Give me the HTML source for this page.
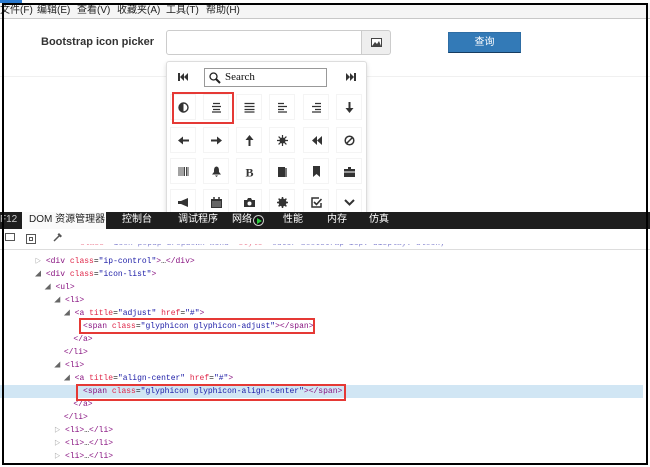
<!DOCTYPE html>
<html><head><meta charset="utf-8"><style>
*{margin:0;padding:0;box-sizing:border-box}
body{width:650px;height:467px;background:#fff;position:relative;overflow:hidden;font-family:"Liberation Sans","Noto Sans CJK SC",sans-serif}
.a{position:absolute}
.menu{left:0;top:3px;width:650px;height:16px;background:#f5f5f5;border-bottom:1px solid #c8c8c8;font-size:10px;line-height:15px;color:#222}
.menu span{position:absolute;top:0}
.cell{position:absolute;width:26px;height:26px;border:1px solid #f4f4f4}
.cell svg{position:absolute;left:7px;top:7px;width:11px;height:11px}
.code{font-family:"Liberation Mono","Noto Sans CJK SC",monospace;font-size:8px;color:#222;white-space:pre;line-height:13px}
.t{color:#881280}.n{color:#e0284a}.v{color:#1a1aa6}
.tab{position:absolute;top:0;color:#fff;font-size:10px;line-height:16px}
.tri{color:#666;font-size:6px}
</style></head><body>
<div class="a menu"><span style="left:0">文件(F)</span><span style="left:37px">编辑(E)</span><span style="left:77px">查看(V)</span><span style="left:117px">收藏夹(A)</span><span style="left:166px">工具(T)</span><span style="left:206px">帮助(H)</span></div>

<div class="a" style="left:0;top:76px;width:650px;height:1px;background:#f0f0f0"></div>
<div class="a" style="left:41px;top:36px;font-size:11px;font-weight:bold;color:#333">Bootstrap icon picker</div>
<div class="a" style="left:166px;top:30px;width:196px;height:25px;border:1px solid #ccc;border-radius:3px 0 0 3px;background:#fff"></div>
<div class="a" style="left:361px;top:30px;width:30px;height:25px;border:1px solid #ccc;border-radius:0 3px 3px 0;background:#eee"><svg class="a" style="left:9px;top:7px" width="11" height="9"><rect x="0.5" y="0.5" width="10" height="8" fill="#fff" stroke="#444"/><path d="M1 8L4 4 6 6 8 3 10 8Z" fill="#444"/></svg></div>
<div class="a" style="left:448px;top:32px;width:73px;height:21px;background:#337ab7;border:1px solid #2e6da4;border-bottom-color:#163c60;color:#fff;font-size:10px;text-align:center;line-height:19px">查询</div>

<div class="a" style="left:166px;top:61px;width:201px;height:160px;border:1px solid #ddd;border-radius:3px;background:#fff;box-shadow:0 2px 5px rgba(0,0,0,.15)"></div>
<svg class="a" style="left:178px;top:73px" width="10" height="8"><rect x="0" y="0" width="2" height="8" fill="#333"/><path d="M6 0L2 4 6 8ZM10 0L6 4 10 8Z" fill="#333"/></svg>
<svg class="a" style="left:346px;top:73px" width="10" height="8"><rect x="8" y="0" width="2" height="8" fill="#333"/><path d="M0 0L4 4 0 8ZM4 0L8 4 4 8Z" fill="#333"/></svg>
<div class="a" style="left:204px;top:68px;width:123px;height:19px;border:1px solid #999;font-family:'Liberation Serif',serif;font-size:11px;line-height:17px;padding-left:20px;color:#111">Search<svg class="a" style="left:4px;top:3px" width="12" height="12"><circle cx="4.5" cy="4.5" r="3.5" fill="none" stroke="#222" stroke-width="1.3"/><path d="M7 7L11 11" stroke="#222" stroke-width="2"/></svg></div>

<div class="cell" style="left:170px;top:94px"><svg viewBox="0 0 11 11"><circle cx="5.5" cy="5.5" r="4.5" fill="#fff" stroke="#333" stroke-width="1.4"/><path d="M5.5 1A4.5 4.5 0 0 0 5.5 10Z" fill="#333"/></svg></div>
<div class="cell" style="left:203px;top:94px"><svg viewBox="0 0 11 11"><path d="M2 1.5h7M1 4.5h9M2 7.5h7M1 10h9" stroke="#333" stroke-width="1.3"/></svg></div>
<div class="cell" style="left:236px;top:94px"><svg viewBox="0 0 11 11"><path d="M0.5 1.5h10M0.5 4.5h10M0.5 7.5h10M0.5 10h10" stroke="#333" stroke-width="1.3"/></svg></div>
<div class="cell" style="left:269px;top:94px"><svg viewBox="0 0 11 11"><path d="M1 1.5h6M1 4.5h9M1 7.5h6M1 10h9" stroke="#333" stroke-width="1.3"/></svg></div>
<div class="cell" style="left:303px;top:94px"><svg viewBox="0 0 11 11"><path d="M4 1.5h6M1 4.5h9M4 7.5h6M1 10h9" stroke="#333" stroke-width="1.3"/></svg></div>
<div class="cell" style="left:336px;top:94px"><svg viewBox="0 0 11 11"><path d="M4.5 0h2v6h3l-4 5-4-5h3Z" fill="#333"/></svg></div>
<div class="cell" style="left:170px;top:127px"><svg viewBox="0 0 11 11"><path d="M11 4.5v2H5v3L0 5.5l5-4v3Z" fill="#333"/></svg></div>
<div class="cell" style="left:203px;top:127px"><svg viewBox="0 0 11 11"><path d="M0 4.5v2h6v3l5-4-5-4v3Z" fill="#333"/></svg></div>
<div class="cell" style="left:236px;top:127px"><svg viewBox="0 0 11 11"><path d="M4.5 11h2V5h3L5.5 0l-4 5h3Z" fill="#333"/></svg></div>
<div class="cell" style="left:269px;top:127px"><svg viewBox="0 0 11 11"><circle cx="5.5" cy="5.5" r="3" fill="#333"/><path d="M5.5 0v11M0 5.5h11M1.6 1.6l7.8 7.8M9.4 1.6l-7.8 7.8" stroke="#333" stroke-width="1.2"/></svg></div>
<div class="cell" style="left:303px;top:127px"><svg viewBox="0 0 11 11"><path d="M6 1L1 5.5 6 10ZM11 1L6 5.5 11 10Z" fill="#333"/></svg></div>
<div class="cell" style="left:336px;top:127px"><svg viewBox="0 0 11 11"><circle cx="5.5" cy="5.5" r="4.3" fill="none" stroke="#333" stroke-width="1.5"/><path d="M2.5 8.5l6-6" stroke="#333" stroke-width="1.5"/></svg></div>
<div class="cell" style="left:170px;top:158px"><svg viewBox="0 0 11 11"><path d="M1 1v9M3 1v9M5 1v9M6.5 1v9M8.5 1v9M10 1v9" stroke="#333" stroke-width="0.9"/></svg></div>
<div class="cell" style="left:203px;top:158px"><svg viewBox="0 0 11 11"><path d="M5.5 0.5C3 1 3 3 3 6L1 8.5h9L8 6C8 3 8 1 5.5 0.5ZM4 9.5h3L5.5 11Z" fill="#333"/></svg></div>
<div class="cell" style="left:236px;top:158px"><svg viewBox="0 0 11 11"><text x="1.5" y="10.5" font-family="Liberation Serif" font-weight="bold" font-size="12" fill="#333">B</text></svg></div>
<div class="cell" style="left:269px;top:158px"><svg viewBox="0 0 11 11"><path d="M1 1h7v10H1Z" fill="#333"/><path d="M8 2h2v9H8" fill="#777"/></svg></div>
<div class="cell" style="left:303px;top:158px"><svg viewBox="0 0 11 11"><path d="M2 0h7v11L5.5 8 2 11Z" fill="#333"/></svg></div>
<div class="cell" style="left:336px;top:158px"><svg viewBox="0 0 11 11"><path d="M0 3h11v8H0Z M4 1h3v2H4Z" fill="#333"/><path d="M0 6h11" stroke="#fff"/></svg></div>
<div class="cell" style="left:170px;top:189px"><svg viewBox="0 0 11 11"><path d="M0 4h3l7-3v9L3 7H0Z" fill="#333"/></svg></div>
<div class="cell" style="left:203px;top:189px"><svg viewBox="0 0 11 11"><path d="M0 2h11v9H0Z" fill="#333"/><path d="M3 0v3M8 0v3" stroke="#333" stroke-width="1.5"/><path d="M1 5h9M1 7h9M1 9h9" stroke="#fff" stroke-width="0.6"/></svg></div>
<div class="cell" style="left:236px;top:189px"><svg viewBox="0 0 11 11"><path d="M0 3h3l1-2h3l1 2h3v7H0Z" fill="#333"/><circle cx="5.5" cy="6.5" r="2" fill="#fff"/></svg></div>
<div class="cell" style="left:269px;top:189px"><svg viewBox="0 0 11 11"><circle cx="5.5" cy="5.5" r="4" fill="#333"/><path d="M5.5 0v11M0 5.5h11M1.6 1.6l7.8 7.8M9.4 1.6l-7.8 7.8" stroke="#333" stroke-width="1.5"/></svg></div>
<div class="cell" style="left:303px;top:189px"><svg viewBox="0 0 11 11"><path d="M8 1H1v9h9V6" fill="none" stroke="#333" stroke-width="1.5"/><path d="M3 5l2.5 2.5L10.5 2" fill="none" stroke="#333" stroke-width="1.6"/></svg></div>
<div class="cell" style="left:336px;top:189px"><svg viewBox="0 0 11 11"><path d="M1 3l4.5 4.5L10 3" fill="none" stroke="#333" stroke-width="2"/></svg></div>
<div class="a" style="left:172px;top:92px;width:62px;height:32px;border:2px solid #e53935"></div>

<div class="a" style="left:0;top:212px;width:650px;height:17px;background:#1e1e1e">
<span class="tab" style="left:0;color:#ccc">F12</span>
<div class="a" style="left:22px;top:0;width:84px;height:17px;background:#fafafa;color:#222;font-size:10px;line-height:16px;padding-left:7px">DOM 资源管理器</div>
<span class="tab" style="left:122px">控制台</span><span class="tab" style="left:178px">调试程序</span><span class="tab" style="left:232px">网络</span>
<span class="a" style="left:253px;top:3px;width:11px;height:11px;border:1px solid #ccc;border-radius:50%;background:#111"><span class="a" style="left:3px;top:2px;border-left:5px solid #2ecc40;border-top:3px solid transparent;border-bottom:3px solid transparent"></span></span>
<span class="tab" style="left:283px">性能</span><span class="tab" style="left:327px">内存</span><span class="tab" style="left:369px">仿真</span>
</div>
<div class="a" style="left:26px;top:234px;width:10px;height:10px;border:1px solid #555"><div class="a" style="left:2px;top:2px;width:4px;height:4px;border:1px solid #555"></div></div>
<svg class="a" style="left:53px;top:233px" width="9" height="9"><path d="M1 8L7 2" stroke="#555" stroke-width="1.5"/><path d="M6 0l3 3-1.5 1.5-3-3Z" fill="#555"/></svg>
<div class="a" style="left:5px;top:233px;width:10px;height:8px;border:1px solid #555"></div>

<div class="a" style="left:0;top:385px;width:643px;height:13px;background:#d1e6f4"></div>
<div class="a" style="left:0;top:244px;width:643px;height:5px;overflow:hidden"><div class="code" style="position:absolute;left:80px;top:-7px;opacity:.55"><span class="n">class</span>=<span class="v">"icon-popup dropdown-menu"</span> <span class="n">style</span>=<span class="v">"outer bootstrap-icp: display: block;"</span></div></div>
<div class="a" style="left:0;top:249px;width:650px;height:1px;background:#ddd"></div>
<div class="a code" style="left:35px;top:255px"><span class="tri">▷</span> <span class="t">&lt;div</span> <span class="n">class</span>=<span class="v">"ip-control"</span><span class="t">&gt;</span>…<span class="t">&lt;/div&gt;</span>
<span class="tri">◢</span> <span class="t">&lt;div</span> <span class="n">class</span>=<span class="v">"icon-list"</span><span class="t">&gt;</span>
  <span class="tri">◢</span> <span class="t">&lt;ul&gt;</span>
    <span class="tri">◢</span> <span class="t">&lt;li&gt;</span>
      <span class="tri">◢</span> <span class="t">&lt;a</span> <span class="n">title</span>=<span class="v">"adjust"</span> <span class="n">href</span>=<span class="v">"#"</span><span class="t">&gt;</span>
          <span class="t">&lt;span</span> <span class="n">class</span>=<span class="v">"glyphicon glyphicon-adjust"</span><span class="t">&gt;&lt;/span&gt;</span>
        <span class="t">&lt;/a&gt;</span>
      <span class="t">&lt;/li&gt;</span>
    <span class="tri">◢</span> <span class="t">&lt;li&gt;</span>
      <span class="tri">◢</span> <span class="t">&lt;a</span> <span class="n">title</span>=<span class="v">"align-center"</span> <span class="n">href</span>=<span class="v">"#"</span><span class="t">&gt;</span>
          <span class="t">&lt;span</span> <span class="n">class</span>=<span class="v">"glyphicon glyphicon-align-center"</span><span class="t">&gt;&lt;/span&gt;</span>
        <span class="t">&lt;/a&gt;</span>
      <span class="t">&lt;/li&gt;</span>
    <span class="tri">▷</span> <span class="t">&lt;li&gt;</span>…<span class="t">&lt;/li&gt;</span>
    <span class="tri">▷</span> <span class="t">&lt;li&gt;</span>…<span class="t">&lt;/li&gt;</span>
    <span class="tri">▷</span> <span class="t">&lt;li&gt;</span>…<span class="t">&lt;/li&gt;</span></div>
<div class="a" style="left:79px;top:318px;width:236px;height:16px;border:2px solid #e53935"></div>
<div class="a" style="left:76px;top:384px;width:270px;height:17px;border:2px solid #e53935"></div>

<div class="a" style="left:2px;top:3px;width:646px;height:462px;border:2px solid #000;pointer-events:none"></div>
<div class="a" style="left:0;top:0;width:22px;height:3px;background:#2a7ad0"></div>
</body></html>
